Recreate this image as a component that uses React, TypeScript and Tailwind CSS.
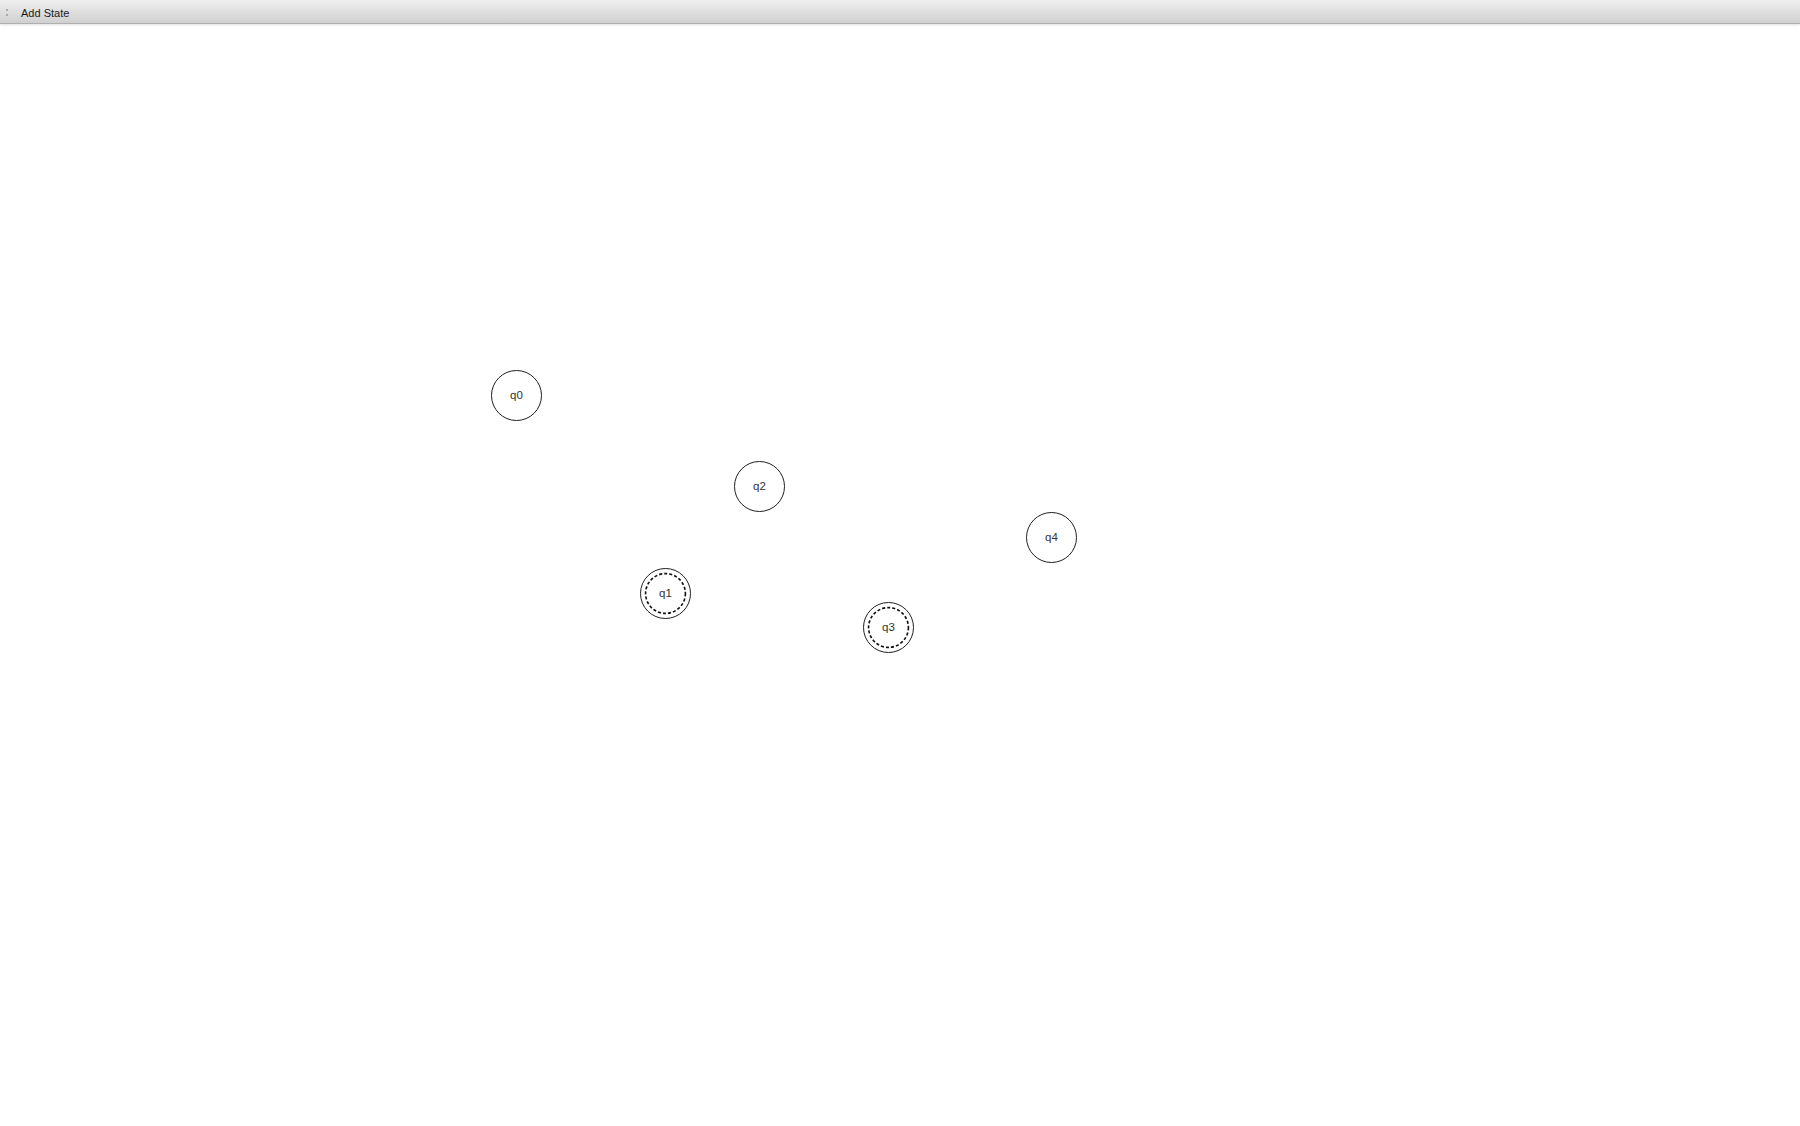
import React from "react";

type Node = { id: string; x: number; y: number; accept?: boolean };

const nodes: Node[] = [
  { id: "q0", x: 491, y: 370 },
  { id: "q2", x: 734, y: 461 },
  { id: "q4", x: 1026, y: 512 },
  { id: "q1", x: 640, y: 568, accept: true },
  { id: "q3", x: 863, y: 602, accept: true },
];

export default function App() {
  return (
    <div
      className="w-[1800px] h-[1126px] bg-white flex flex-col overflow-hidden"
      style={{ fontFamily: '"Liberation Sans", Arial, sans-serif' }}
    >
      <div className="h-[24px] shrink-0 flex items-center bg-gradient-to-b from-[#efefef] to-[#d0d0d0] border-b border-[#b0b0b0] shadow-[0_1px_2px_rgba(0,0,0,0.12)]">
        <div className="w-[21px] h-full flex flex-col items-center justify-center gap-[3px] pr-[7px] pt-[2px]">
          <span className="w-[2px] h-[2px] bg-[#9a9a9a] rounded-full" />
          <span className="w-[2px] h-[2px] bg-[#9a9a9a] rounded-full" />
        </div>
        <span className="text-[11px] text-[#1a1a1a] leading-none pt-[3px]">Add State</span>
      </div>
      <div className="relative flex-1">
        {nodes.map((n) => (
          <div
            key={n.id}
            className="absolute w-[51px] h-[51px] rounded-full border-[1.5px] border-[#1f1f1f] flex items-center justify-center bg-white"
            style={{ left: n.x, top: n.y - 24 }}
          >
            {n.accept && (
              <svg className="absolute inset-0 w-full h-full" viewBox="0 0 48 48">
                <circle
                  cx="24"
                  cy="24"
                  r="19.5"
                  fill="none"
                  stroke="#111"
                  strokeWidth="1.6"
                  strokeDasharray="3 2"
                />
              </svg>
            )}
            <span className="relative text-[11.5px] text-[#333] leading-none">{n.id}</span>
          </div>
        ))}
      </div>
    </div>
  );
}
